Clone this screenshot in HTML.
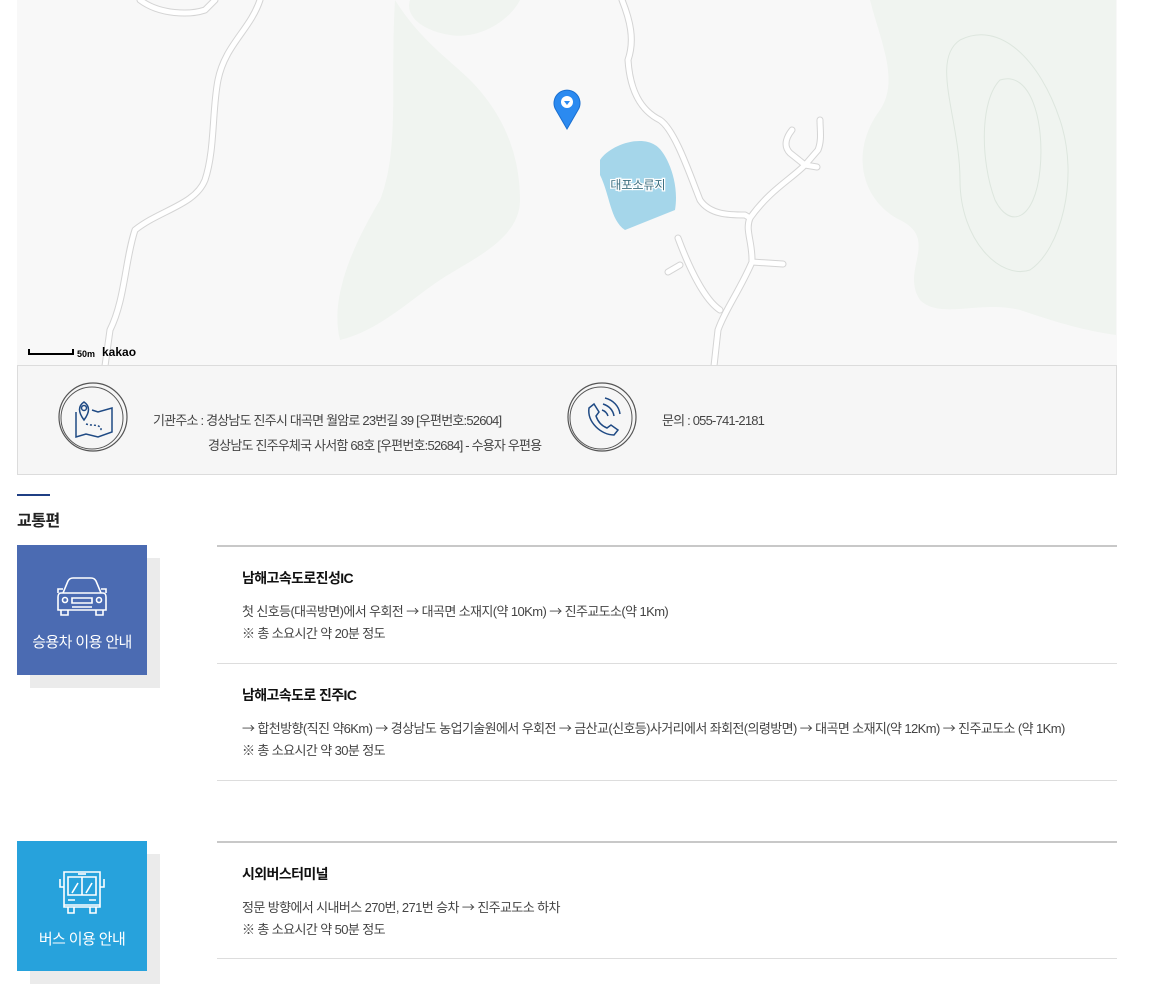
<!DOCTYPE html>
<html><head><meta charset="utf-8"><style>
*{margin:0;padding:0;box-sizing:border-box}
body{width:1166px;height:998px;background:#fff;font-family:"Liberation Sans","Noto Sans CJK KR",sans-serif;color:#333;position:relative;overflow:hidden}
.abs{position:absolute}
.t{font-size:13px;color:#444;letter-spacing:-0.6px;white-space:nowrap}
.h{font-size:14px;font-weight:bold;color:#111;letter-spacing:-0.6px;white-space:nowrap}
.a{font-family:"Noto Sans CJK KR",sans-serif}
</style></head><body>
<svg class="abs" style="left:17px;top:0" width="1100" height="366" viewBox="17 0 1100 366">
<rect x="17" y="0" width="1100" height="366" fill="#f8f8f8"/>
<path d="M395 0 C 420 40 450 60 470 80 C 500 110 520 150 520 200 C 520 240 470 260 440 280 C 410 300 380 330 340 340 C 330 300 350 250 380 200 C 400 150 390 80 395 0Z" fill="#f0f4f0"/>
<path d="M410 0 L520 0 C 510 20 480 40 450 35 C 420 30 405 15 410 0Z" fill="#f0f4f0"/>
<path d="M870 0 L1116 0 L1116 335 C 1080 330 1050 320 1020 310 C 980 300 940 320 920 300 C 900 270 940 240 900 220 C 860 200 850 150 880 110 C 900 80 880 40 870 0Z" fill="#f0f4f0"/>
<path d="M960 40 C 1000 20 1040 60 1060 120 C 1080 180 1060 250 1030 270 C 1000 280 960 240 960 180 C 960 120 930 60 960 40Z" fill="none" stroke="#dde6de" stroke-width="1"/>
<path d="M1000 80 C 1030 70 1045 120 1040 170 C 1035 220 1010 230 995 200 C 980 160 980 100 1000 80Z" fill="none" stroke="#dde6de" stroke-width="1"/>
<path d="M600 160 C 610 145 640 135 655 145 C 665 150 680 180 675 210 L625 230 C 610 220 610 195 600 175Z" fill="#a5d6ea"/>
<g fill="none" stroke-linecap="round" stroke-linejoin="round">
<g stroke="#d4d4d4" stroke-width="7">
<path d="M140 0 C 160 15 190 15 205 10 L215 0"/>
<path d="M260 0 C 250 30 225 45 218 80 C 212 110 215 150 205 180 C 195 205 160 210 135 230 C 125 260 125 300 110 330 L105 366"/>
<path d="M622 0 C 630 20 635 40 628 60 C 630 90 640 110 660 120 C 675 130 690 175 700 200 C 710 215 730 215 745 215 L750 218 C 745 230 752 240 752 260 L752 262 L783 264 M752 262 C 740 290 725 310 718 330 L714 366"/>
<path d="M750 218 C 770 190 790 180 805 165 L818 150 C 822 140 820 130 820 120 M805 165 L790 153 C 782 145 788 135 792 130 M805 165 L817 167"/>
<path d="M678 238 C 690 270 705 300 720 310"/>
<path d="M668 272 L680 265"/>
</g>
<g stroke="#fff" stroke-width="5">
<path d="M140 0 C 160 15 190 15 205 10 L215 0"/>
<path d="M260 0 C 250 30 225 45 218 80 C 212 110 215 150 205 180 C 195 205 160 210 135 230 C 125 260 125 300 110 330 L105 366"/>
<path d="M622 0 C 630 20 635 40 628 60 C 630 90 640 110 660 120 C 675 130 690 175 700 200 C 710 215 730 215 745 215 L750 218 C 745 230 752 240 752 260 L752 262 L783 264 M752 262 C 740 290 725 310 718 330 L714 366"/>
<path d="M750 218 C 770 190 790 180 805 165 L818 150 C 822 140 820 130 820 120 M805 165 L790 153 C 782 145 788 135 792 130 M805 165 L817 167"/>
<path d="M678 238 C 690 270 705 300 720 310"/>
<path d="M668 272 L680 265"/>
</g></g>
<text x="638" y="189" font-size="12" fill="#3d6f80" text-anchor="middle" font-family="Liberation Sans,Noto Sans CJK KR,sans-serif" stroke="#fff" stroke-width="2.5" paint-order="stroke">대포소류지</text>
<path d="M567 129 L556 110 A13 13 0 1 1 578 110Z" fill="#2b8af0" stroke="#1a6fd0"/>
<circle cx="567" cy="102" r="6" fill="#fff"/><path d="M564 101 L570 101 L567 105Z" fill="#2b8af0"/>
<path d="M29 349 V354 H73 V349" fill="none" stroke="#000" stroke-width="2"/>
<text x="77" y="357" font-size="9" fill="#000" font-weight="bold" font-family="Liberation Sans,sans-serif">50m</text>
<text x="102" y="356" font-size="12" fill="#000" font-weight="bold" font-family="Liberation Sans,sans-serif">kakao</text>
</svg>
<div class="abs" style="left:17px;top:365px;width:1100px;height:110px;background:#f6f6f6;border:1px solid #dcdcdc"></div>
<svg class="abs" style="left:56px;top:382px" width="74" height="74"><circle cx="37" cy="35" r="34" fill="none" stroke="#555" stroke-width="1.2"/><circle cx="36" cy="36" r="31" fill="none" stroke="#555" stroke-width="1"/>
<g fill="none" stroke="#1f4a84" stroke-width="1.5"><path d="M20 30 V55 L30 52 L42 55 L56 50 V26 L42 30 L36 28"/><path d="M28 38 C 22 30 22 24 28 20 C 34 24 34 30 28 38Z"/><circle cx="28" cy="26" r="2.5"/><path d="M30 42 C 36 44 42 42 45 46 L45 50" stroke-dasharray="2 2"/></g></svg>
<div class="abs t" style="left:153px;top:410px;letter-spacing:-0.8px">기관주소 : 경상남도 진주시 대곡면 월암로 23번길 39 [우편번호:52604]</div>
<div class="abs t" style="left:208px;top:435px;letter-spacing:-0.8px">경상남도 진주우체국 사서함 68호 [우편번호:52684] - 수용자 우편용</div>
<svg class="abs" style="left:565px;top:382px" width="74" height="74"><circle cx="37" cy="35" r="34" fill="none" stroke="#555" stroke-width="1.2"/><circle cx="36" cy="36" r="31" fill="none" stroke="#555" stroke-width="1"/>
<g fill="none" stroke="#1f4a84" stroke-width="1.5"><path d="M24 26 L29 22 L34 30 L31 34 C 33 40 37 44 42 46 L46 43 L53 48 L49 53 C 36 53 22 40 24 26Z"/><path d="M37 28 C 40 29 42 31 43 34"/><path d="M38 22 C 44 24 48 28 49 34"/><path d="M40 16 C 48 18 54 24 55 32"/></g></svg>
<div class="abs t" style="left:662px;top:410px;letter-spacing:-0.8px">문의 : 055-741-2181</div>
<div class="abs" style="left:17px;top:494px;width:33px;height:2px;background:#1f3f84"></div>
<div class="abs" style="left:17px;top:507px;font-size:16px;font-weight:bold;color:#222;letter-spacing:-0.5px">교통편</div>

<div class="abs" style="left:30px;top:558px;width:130px;height:130px;background:#ebebeb"></div>
<div class="abs" style="left:17px;top:545px;width:130px;height:130px;background:#4b6bb2"></div>
<svg class="abs" style="left:55px;top:576px" width="54" height="42" fill="none" stroke="#fff" stroke-width="1.6"><path d="M8 17 L13 5 C14 3 16 2 18 2 H36 C38 2 40 3 41 5 L46 17"/><path d="M6 17 H48 C50 17 51 19 51 21 V34 H3 V21 C3 19 4 17 6 17Z"/><path d="M6 34 V39 H13 V34 M41 34 V39 H48 V34"/><path d="M8 13 H3 V17 M46 13 H51 V17"/><circle cx="10" cy="24" r="2.5"/><circle cx="44" cy="24" r="2.5"/><path d="M17 22 H37 V27 H17Z M17 31 H37"/></svg>
<div class="abs" style="left:17px;top:631px;width:130px;text-align:center;color:#fff;font-size:15px;letter-spacing:-0.6px">승용차 이용 안내</div>

<div class="abs" style="left:217px;top:545px;width:900px;height:2px;background:#c8c8c8"></div>
<div class="abs h" style="left:242px;top:568px">남해고속도로진성IC</div>
<div class="abs t" style="left:242px;top:601px">첫 신호등(대곡방면)에서 우회전 <span class="a">→</span> 대곡면 소재지(약 10Km) <span class="a">→</span> 진주교도소(약 1Km)</div>
<div class="abs t" style="left:242px;top:623px">※ 총 소요시간 약 20분 정도</div>
<div class="abs" style="left:217px;top:663px;width:900px;height:1px;background:#ddd"></div>
<div class="abs h" style="left:242px;top:685px">남해고속도로 진주IC</div>
<div class="abs t" style="left:242px;top:718px"><span class="a">→</span> 합천방향(직진 약6Km) <span class="a">→</span> 경상남도 농업기술원에서 우회전 <span class="a">→</span> 금산교(신호등)사거리에서 좌회전(의령방면) <span class="a">→</span> 대곡면 소재지(약 12Km) <span class="a">→</span> 진주교도소 (약 1Km)</div>
<div class="abs t" style="left:242px;top:740px">※ 총 소요시간 약 30분 정도</div>
<div class="abs" style="left:217px;top:780px;width:900px;height:1px;background:#ddd"></div>

<div class="abs" style="left:30px;top:854px;width:130px;height:130px;background:#ebebeb"></div>
<div class="abs" style="left:17px;top:841px;width:130px;height:130px;background:#27a2dc"></div>
<svg class="abs" style="left:58px;top:869px" width="48" height="48" fill="none" stroke="#fff" stroke-width="1.6"><path d="M6 3 H42 V38 H6Z"/><path d="M10 8 H38 V26 H10Z M24 8 V26 M14 24 L20 14 M28 24 L34 14"/><path d="M2 10 V18 H6 M46 10 V18 H42"/><path d="M10 31 H17 M31 31 H38 M6 36 H42"/><path d="M10 38 V44 H16 V38 M32 38 V44 H38 V38"/><path d="M20 5 H28"/></svg>
<div class="abs" style="left:17px;top:928px;width:130px;text-align:center;color:#fff;font-size:15px;letter-spacing:-0.6px">버스 이용 안내</div>

<div class="abs" style="left:217px;top:841px;width:900px;height:2px;background:#c8c8c8"></div>
<div class="abs h" style="left:242px;top:864px">시외버스터미널</div>
<div class="abs t" style="left:242px;top:897px">정문 방향에서 시내버스 270번, 271번 승차 <span class="a">→</span> 진주교도소 하차</div>
<div class="abs t" style="left:242px;top:919px">※ 총 소요시간 약 50분 정도</div>
<div class="abs" style="left:217px;top:958px;width:900px;height:1px;background:#ddd"></div>
</body></html>
